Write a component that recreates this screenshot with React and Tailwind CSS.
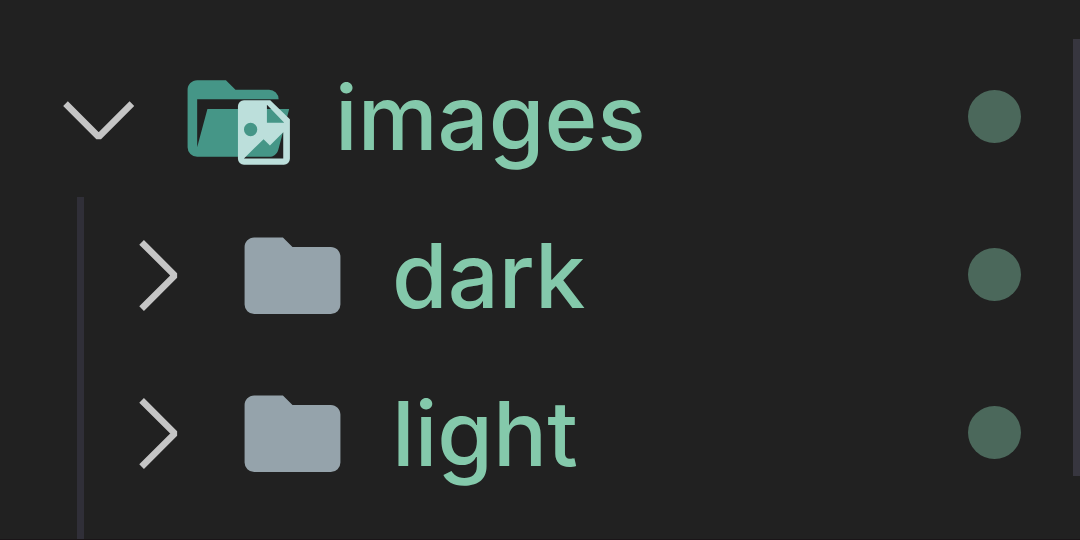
function Chevron({ open }) {
  return (
    <svg viewBox="0 0 80 80" className="h-20 w-20 shrink-0" fill="none" stroke="#c5c5c5" strokeWidth="6.6" strokeLinejoin="bevel" aria-hidden="true">
      <path d={open ? "M6.5 25.6L39.7 58.8L72.9 25.6" : "M25.6 6.3L58.8 39.5L25.6 72.7"} />
    </svg>
  );
}

function FolderIcon() {
  return (
    <svg viewBox="0 0 24 24" className="h-[115px] w-[115px] shrink-0" fill="#95a3ab" aria-hidden="true">
      <path d="M10 3.85H4c-1.11 0-2 .89-2 2v12a2 2 0 0 0 2 2h16a2 2 0 0 0 2-2v-10c0-1.11-.9-2-2-2h-8z" />
    </svg>
  );
}

function ImagesFolderIcon() {
  return (
    <svg viewBox="0 0 24 24" className="h-[115px] w-[115px] shrink-0" aria-hidden="true">
      <path
        fill="#459687"
        d="M19 20H4a2 2 0 0 1-2-2V6c0-1.11.89-2 2-2h6l2 2h7a2 2 0 0 1 2 2H4v10l2.14-8h17.07l-2.28 8.5c-.23.87-1.01 1.5-1.93 1.5z"
      />
      <g transform="translate(.417 1.92) scale(.0695)">
        <path
          fill="#bcdfdb"
          fillRule="evenodd"
          d="M192 90H271L330 147V266a18 18 0 0 1-18 18H192a18 18 0 0 1-18-18V108a18 18 0 0 1 18-18zM261 104V158H313zM192 265H310V186L270 226L251 207zM212 158a20 20 0 1 0 0 40a20 20 0 1 0 0-40z"
        />
      </g>
    </svg>
  );
}

function Row({ name, open, icon }) {
  return (
    <div className="flex h-[158px] items-center pr-[52px]">
      <button type="button" aria-expanded={open} className="flex min-w-0 flex-1 items-center text-left">
        <Chevron open={open} />
        <span className="ml-[39px] shrink-0">{icon}</span>
        <span className="ml-[42px] text-[90px] leading-[120px] font-medium whitespace-nowrap text-[#84c9ab]">{name}</span>
      </button>
      <span className="mb-1 h-[53px] w-[53px] shrink-0 rounded-full bg-[#4b685b]" />
    </div>
  );
}

export default function App() {
  return (
    <main className="flex min-h-screen overflow-hidden border-b border-[#1a1518] bg-[#212121] font-['Inter','Liberation_Sans',sans-serif]">
      <ul className="flex min-w-0 flex-1 flex-col pt-[39px]">
        <li className="flex flex-1 flex-col">
          <div className="pl-[59px]">
            <Row name="images" open icon={<ImagesFolderIcon />} />
          </div>
          <ul className="ml-[77px] flex-1 border-l-[7px] border-[#302f38] pl-8">
            <li>
              <Row name="dark" open={false} icon={<FolderIcon />} />
            </li>
            <li>
              <Row name="light" open={false} icon={<FolderIcon />} />
            </li>
          </ul>
        </li>
      </ul>
      <div className="mt-[39px] h-[437px] w-[7px] shrink-0 bg-[#37363f]" />
    </main>
  );
}
